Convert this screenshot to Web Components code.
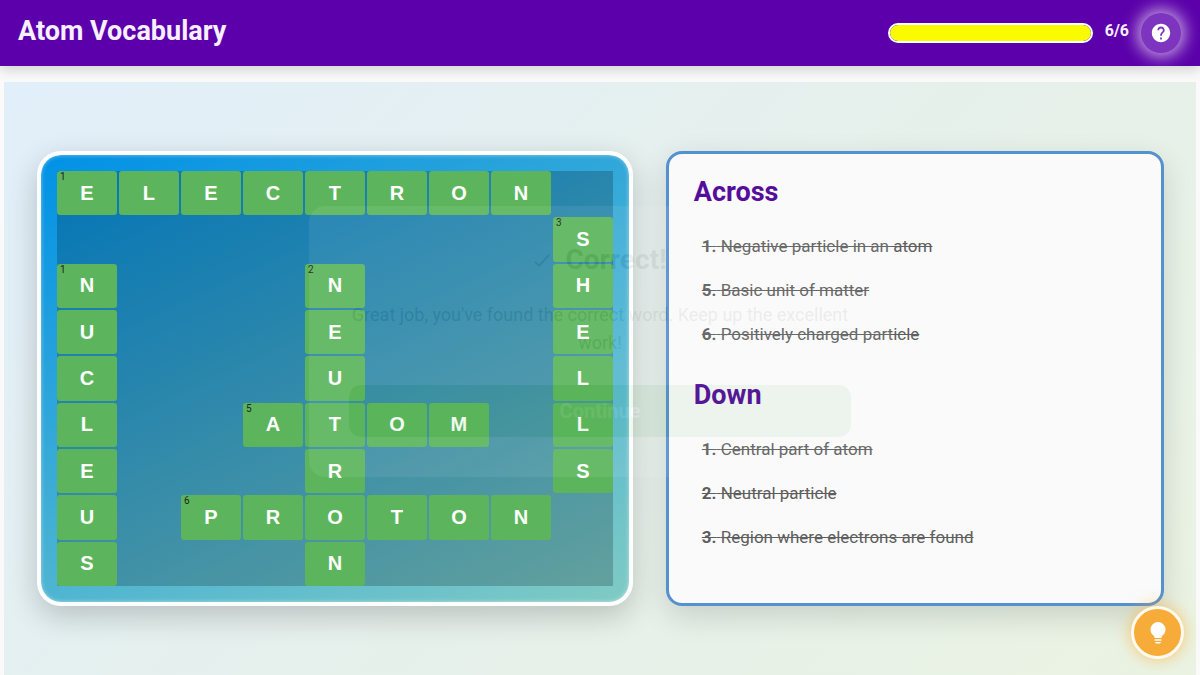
<!DOCTYPE html>
<html lang="en">
<head>
<meta charset="utf-8">
<meta name="viewport" content="width=device-width, initial-scale=1">
<title>Atom Vocabulary</title>
<style>
  body { margin: 0; background: #fafafa; font-family: Roboto, "Liberation Sans", sans-serif; color: #333; }
</style>
</head>
<body>
<crossword-app></crossword-app>

<script>
class ShadowElement extends HTMLElement {
  constructor() {
    super();
    this.attachShadow({ mode: 'open' });
  }
  connectedCallback() {
    this.shadowRoot.innerHTML = this.render();
  }
}

customElements.define('score-progress', class extends ShadowElement {
  render() {
    const value = Number(this.getAttribute('value'));
    const max = Number(this.getAttribute('max'));
    return `
      <style>
        :host { display: flex; align-items: center; gap: 12px; }
        .track { box-sizing: border-box; width: 205px; height: 20px; border: 2px solid #fff; border-radius: 10px; overflow: hidden; background: rgba(255,255,255,.2); }
        .fill { height: 100%; width: ${100 * value / max}%; background: #fafa00; border-radius: 8px; }
        .count { color: #f8f0ff; font-size: 16px; font-weight: 700; line-height: 24px; padding-bottom: 4px; }
      </style>
      <div class="track" role="progressbar" aria-label="Words found" aria-valuenow="${value}" aria-valuemax="${max}"><div class="fill"></div></div>
      <span class="count">${value}/${max}</span>`;
  }
});

customElements.define('round-button', class extends ShadowElement {
  render() {
    return `
      <style>
        :host { display: block; }
        button { box-sizing: border-box; display: flex; align-items: center; justify-content: center; width: var(--size, 40px); height: var(--size, 40px); padding: 0; border: var(--ring, none); border-radius: 50%; background: var(--fill); box-shadow: var(--glow); color: #fff; cursor: pointer; }
      </style>
      <button type="button" aria-label="${this.getAttribute('label')}"><slot></slot></button>`;
  }
});

customElements.define('game-header', class extends ShadowElement {
  render() {
    return `
      <style>
        :host { display: flex; align-items: center; justify-content: space-between; box-sizing: border-box; height: 66px; padding: 0 19px 0 18px; background: #5b00aa; box-shadow: 0 4px 12px rgba(0,0,0,.16); overflow: hidden; }
        h1 { margin: 0; padding-bottom: 4px; color: #f8f0ff; font-size: 27px; line-height: 36px; font-weight: 700; }
        .tools { display: flex; align-items: center; gap: 12px; }
        round-button { --size: 40px; --fill: #7d35bf; --glow: 0 0 16px 4px rgba(255,255,255,.65); }
      </style>
      <h1><slot></slot></h1>
      <div class="tools">
        <score-progress value="6" max="6"></score-progress>
        <round-button label="Help">
          <svg width="22" height="22" viewBox="0 0 24 24" fill="#fff" aria-hidden="true"><path d="M12 2C6.48 2 2 6.48 2 12s4.48 10 10 10 10-4.48 10-10S17.52 2 12 2zm1 17h-2v-2h2v2zm2.07-7.75l-.9.92C13.45 12.9 13 13.5 13 15h-2v-.5c0-1.1.45-2.1 1.17-2.83l1.24-1.26c.37-.36.59-.86.59-1.41 0-1.1-.9-2-2-2s-2 .9-2 2H8c0-2.21 1.79-4 4-4s4 1.79 4 4c0 .88-.36 1.68-.93 2.25z"/></svg>
        </round-button>
      </div>`;
  }
});

customElements.define('crossword-cell', class extends ShadowElement {
  render() {
    const letter = this.getAttribute('letter');
    const number = this.getAttribute('number');
    return `
      <style>
        :host { display: block; position: relative; min-width: 0; min-height: 0; }
        input { box-sizing: border-box; display: block; width: 100%; height: 100%; min-width: 0; padding: 0; border: 0; border-radius: 3px; background: #5cb55c; color: #fff; font: 700 20px "Liberation Sans", Arial, sans-serif; text-align: center; }
        span { position: absolute; top: 0; left: 3px; color: #222; font-size: 10px; line-height: 12px; }
      </style>
      <input type="text" maxlength="1" readonly value="${letter}" aria-label="Letter ${letter}">
      ${number ? `<span>${number}</span>` : ''}`;
  }
});

customElements.define('crossword-board', class extends ShadowElement {
  render() {
    const rows = [
      'ELECTRON.',
      '........S',
      'N...N...H',
      'U...E...E',
      'C...U...L',
      'L..ATOM.L',
      'E...R...S',
      'U.PROTON.',
      'S...N....'
    ];
    const numbers = { '0,0': 1, '1,8': 3, '2,0': 1, '2,4': 2, '5,3': 5, '7,2': 6 };
    const cells = rows.map((row, r) => [...row].map((letter, c) => {
      if (letter === '.') return '';
      const number = numbers[r + ',' + c];
      return `<crossword-cell letter="${letter}" ${number ? `number="${number}"` : ''} style="grid-area: ${r + 1} / ${c + 1}"></crossword-cell>`;
    }).join('')).join('');
    return `
      <style>
        :host { box-sizing: border-box; display: grid; width: 100%; max-width: 596px; padding: 16px; border: 4px solid rgba(255,255,255,.9); border-radius: 24px; background: linear-gradient(155deg, #0091e6, #80cbc4) padding-box; box-shadow: 0 10px 30px rgba(0,0,0,.2), inset 0 0 4px rgba(255,255,255,.5); }
        .grid { display: grid; grid-template-columns: repeat(9, minmax(0, 1fr)); grid-template-rows: repeat(9, minmax(0, 1fr)); gap: 2px; background: rgba(0,0,0,.2); }
      </style>
      <div class="grid">${cells}</div>`;
  }
});

customElements.define('clue-list', class extends ShadowElement {
  render() {
    return `
      <style>
        :host { display: block; margin-bottom: 25px; }
        h2 { margin: 0 0 18px; color: #560d9c; font-size: 27px; line-height: 28px; font-weight: 700; }
        div { font-size: 17px; line-height: 28px; }
      </style>
      <h2>${this.getAttribute('heading')}</h2>
      <div role="list"><slot></slot></div>`;
  }
});

customElements.define('clue-item', class extends ShadowElement {
  render() {
    return `
      <style>
        :host { display: block; padding: 8px; color: #5e5e5e; text-decoration: line-through; }
      </style>
      <strong>${this.getAttribute('number')}.</strong> <slot></slot>`;
  }
});

customElements.define('clue-panel', class extends ShadowElement {
  render() {
    return `
      <style>
        :host { box-sizing: border-box; display: block; padding: 24px 25px 19px; border: 3px solid #5590cf; border-radius: 16px; background: #fafafa; box-shadow: 0 10px 30px rgba(0,0,0,.14); }
      </style>
      <clue-list heading="Across">
        <clue-item role="listitem" number="1">Negative particle in an atom</clue-item>
        <clue-item role="listitem" number="5">Basic unit of matter</clue-item>
        <clue-item role="listitem" number="6">Positively charged particle</clue-item>
      </clue-list>
      <clue-list heading="Down">
        <clue-item role="listitem" number="1">Central part of atom</clue-item>
        <clue-item role="listitem" number="2">Neutral particle</clue-item>
        <clue-item role="listitem" number="3">Region where electrons are found</clue-item>
      </clue-list>`;
  }
});

customElements.define('result-dialog', class extends ShadowElement {
  render() {
    return `
      <style>
        :host { position: fixed; inset: 8px 0 0; display: flex; align-items: center; justify-content: center; pointer-events: none; opacity: .07; }
        .card { box-sizing: border-box; width: 582px; padding: 40px; border-radius: 16px; background: #fff; text-align: center; }
        h2 { display: flex; align-items: center; justify-content: center; gap: 14px; margin: 0 0 27px; font-size: 28px; line-height: 28px; color: #333; }
        p { margin: 0 0 28px; font-size: 18px; line-height: 28px; }
        button { display: block; width: 100%; height: 52px; border: 0; border-radius: 12px; background: #4caf50; color: #fff; font: 700 20px Roboto, sans-serif; }
      </style>
      <div class="card" role="dialog" aria-label="Correct!">
        <h2><svg width="18" height="18" viewBox="0 0 20 20" fill="none" stroke="#357" stroke-width="2" aria-hidden="true"><path d="M2 12l5 4L18 4"/></svg>Correct!</h2>
        <p>Great job, you've found the correct word. Keep up the excellent work!</p>
        <button type="button">Continue</button>
      </div>`;
  }
});

customElements.define('crossword-app', class extends ShadowElement {
  render() {
    return `
      <style>
        :host { display: flex; flex-direction: column; gap: 16px; min-height: 100vh; }
        main { flex: 1; display: grid; grid-template-columns: 6fr 5fr; gap: 32px; align-content: center; margin: 0 4px; padding: 32px; background: linear-gradient(135deg, #e1effa, #e6f0ec 50%, #eaf3e2); }
        crossword-board { justify-self: center; }
        .hint { position: fixed; right: 16px; bottom: 16px; --size: 53px; --ring: 3px solid #fffaf0; --fill: #f7ab38; --glow: 0 0 16px rgba(255,165,30,.6); }
      </style>
      <game-header>Atom Vocabulary</game-header>
      <main>
        <crossword-board></crossword-board>
        <clue-panel></clue-panel>
      </main>
      <round-button class="hint" label="Hint">
        <svg width="16" height="22" viewBox="0 0 16 22" fill="#fff" aria-hidden="true"><path d="M8 0a7.5 7.5 0 0 0-7.5 7.5c0 2.7 1.3 4.6 3 6.1.7.7.9 1.4 1 2.4h7c.1-1 .3-1.7 1-2.4 1.7-1.5 3-3.4 3-6.1A7.5 7.5 0 0 0 8 0zM4.5 17.2h7v1.6h-7zM5 20h6c-.3 1-1 1.5-1.8 1.5H6.8C6 21.5 5.3 21 5 20z"/></svg>
      </round-button>
      <result-dialog></result-dialog>`;
  }
});
</script>
</body>
</html>
